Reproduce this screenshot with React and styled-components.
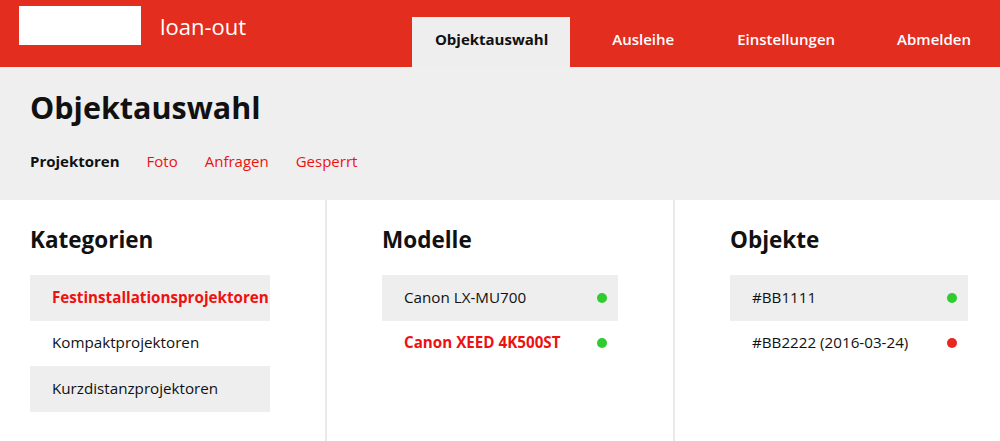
import React, { useState } from 'react';
import styled, { createGlobalStyle } from 'styled-components';

const GlobalStyle = createGlobalStyle`
  html, body {
    margin: 0;
    padding: 0;
    background: #fff;
    font-family: "Open Sans", "Liberation Sans", sans-serif;
    color: #111;
  }
  * {
    box-sizing: border-box;
  }
`;

const RED = '#e32d1e';
const LINK_RED = '#ee1111';

const Header = styled.header`
  display: flex;
  align-items: flex-start;
  height: 67px;
  background: ${RED};
`;

const Logo = styled.div`
  width: 122px;
  height: 39px;
  margin: 6px 0 0 19px;
  background: #fff;
`;

const Brand = styled.div`
  margin: 10px 0 0 19px;
  font-size: 22px;
  line-height: 32px;
  color: #fff;
`;

const Nav = styled.nav`
  display: flex;
  margin-left: auto;
  margin-top: 17px;
  height: 50px;
`;

const NavTab = styled.button`
  height: 50px;
  padding: 0 ${(p) => p.$right}px 6px ${(p) => p.$left}px;
  border: none;
  background: ${(p) => (p.$active ? '#eee' : 'transparent')};
  color: ${(p) => (p.$active ? '#111' : '#fff')};
  font-family: inherit;
  font-size: 15px;
  font-weight: ${(p) => (p.$active ? 700 : 600)};
  cursor: pointer;
`;

const Hero = styled.section`
  height: 133px;
  background: #efefef;
  padding: 21px 30px 0;
`;

const Title = styled.h1`
  margin: 0;
  font-size: 30.5px;
  line-height: 38px;
  font-weight: 700;
`;

const SubNav = styled.div`
  display: flex;
  gap: 27px;
  margin-top: 24px;
`;

const SubLink = styled.a`
  font-size: 15px;
  line-height: 22px;
  font-weight: ${(p) => (p.$active ? 700 : 400)};
  color: ${(p) => (p.$active ? '#111' : LINK_RED)};
  text-decoration: none;
  cursor: pointer;
`;

const Columns = styled.main`
  display: grid;
  grid-template-columns: 327px 348px 1fr;
  height: 241px;
  overflow: hidden;
`;

const Column = styled.section`
  padding: 26px 0 0 ${(p) => p.$left}px;
  border-right: ${(p) => (p.$last ? 'none' : '2px solid #eaeaea')};
`;

const ColTitle = styled.h2`
  margin: 0 0 21px;
  font-size: 22.5px;
  line-height: 28px;
  font-weight: 700;
`;

const List = styled.ul`
  list-style: none;
  margin: 0;
  padding: 0;
  width: ${(p) => p.$width}px;
`;

const Item = styled.li`
  display: flex;
  align-items: center;
  height: 45.5px;
  padding: 0 11px 0 22px;
  background: ${(p) => (p.$shade ? '#eee' : 'transparent')};
  color: ${(p) => (p.$active ? LINK_RED : '#111')};
  font-size: 15.2px;
  font-weight: ${(p) => (p.$active ? 700 : 400)};
  cursor: pointer;
  white-space: nowrap;
`;

const Label = styled.span`
  flex: 1;
  margin-top: -2px;
`;

const Dot = styled.span`
  width: 10px;
  height: 10px;
  border-radius: 50%;
  background: ${(p) => (p.$ok ? '#2ecc2e' : '#e8281e')};
`;

const tabs = [
  { label: 'Objektauswahl', left: 23, right: 22 },
  { label: 'Ausleihe', left: 42, right: 0 },
  { label: 'Einstellungen', left: 63, right: 0 },
  { label: 'Abmelden', left: 62, right: 29 },
];

const categories = ['Festinstallationsprojektoren', 'Kompaktprojektoren', 'Kurzdistanzprojektoren'];

const models = [
  { name: 'Canon LX-MU700', ok: true },
  { name: 'Canon XEED 4K500ST', ok: true },
];

const objects = [
  { name: '#BB1111', ok: true },
  { name: '#BB2222 (2016-03-24)', ok: false },
];

function App() {
  const [tab, setTab] = useState('Objektauswahl');
  const [category, setCategory] = useState(0);
  const [model, setModel] = useState(1);

  return (
    <>
      <GlobalStyle />
      <Header>
        <Logo />
        <Brand>loan-out</Brand>
        <Nav>
          {tabs.map((t) => (
            <NavTab
              key={t.label}
              $left={t.left}
              $right={t.right}
              $active={tab === t.label}
              onClick={() => setTab(t.label)}
            >
              {t.label}
            </NavTab>
          ))}
        </Nav>
      </Header>
      <Hero>
        <Title>Objektauswahl</Title>
        <SubNav>
          <SubLink $active>Projektoren</SubLink>
          <SubLink>Foto</SubLink>
          <SubLink>Anfragen</SubLink>
          <SubLink>Gesperrt</SubLink>
        </SubNav>
      </Hero>
      <Columns>
        <Column $left={30}>
          <ColTitle>Kategorien</ColTitle>
          <List $width={240}>
            {categories.map((c, i) => (
              <Item
                key={c}
                $shade={i % 2 === 0}
                $active={category === i}
                onClick={() => setCategory(i)}
              >
                <Label>{c}</Label>
              </Item>
            ))}
          </List>
        </Column>
        <Column $left={55}>
          <ColTitle>Modelle</ColTitle>
          <List $width={236}>
            {models.map((m, i) => (
              <Item
                key={m.name}
                $shade={i % 2 === 0}
                $active={model === i}
                onClick={() => setModel(i)}
              >
                <Label>{m.name}</Label>
                <Dot $ok={m.ok} />
              </Item>
            ))}
          </List>
        </Column>
        <Column $left={55} $last>
          <ColTitle>Objekte</ColTitle>
          <List $width={238}>
            {objects.map((o, i) => (
              <Item key={o.name} $shade={i % 2 === 0}>
                <Label>{o.name}</Label>
                <Dot $ok={o.ok} />
              </Item>
            ))}
          </List>
        </Column>
      </Columns>
    </>
  );
}

export default App;
